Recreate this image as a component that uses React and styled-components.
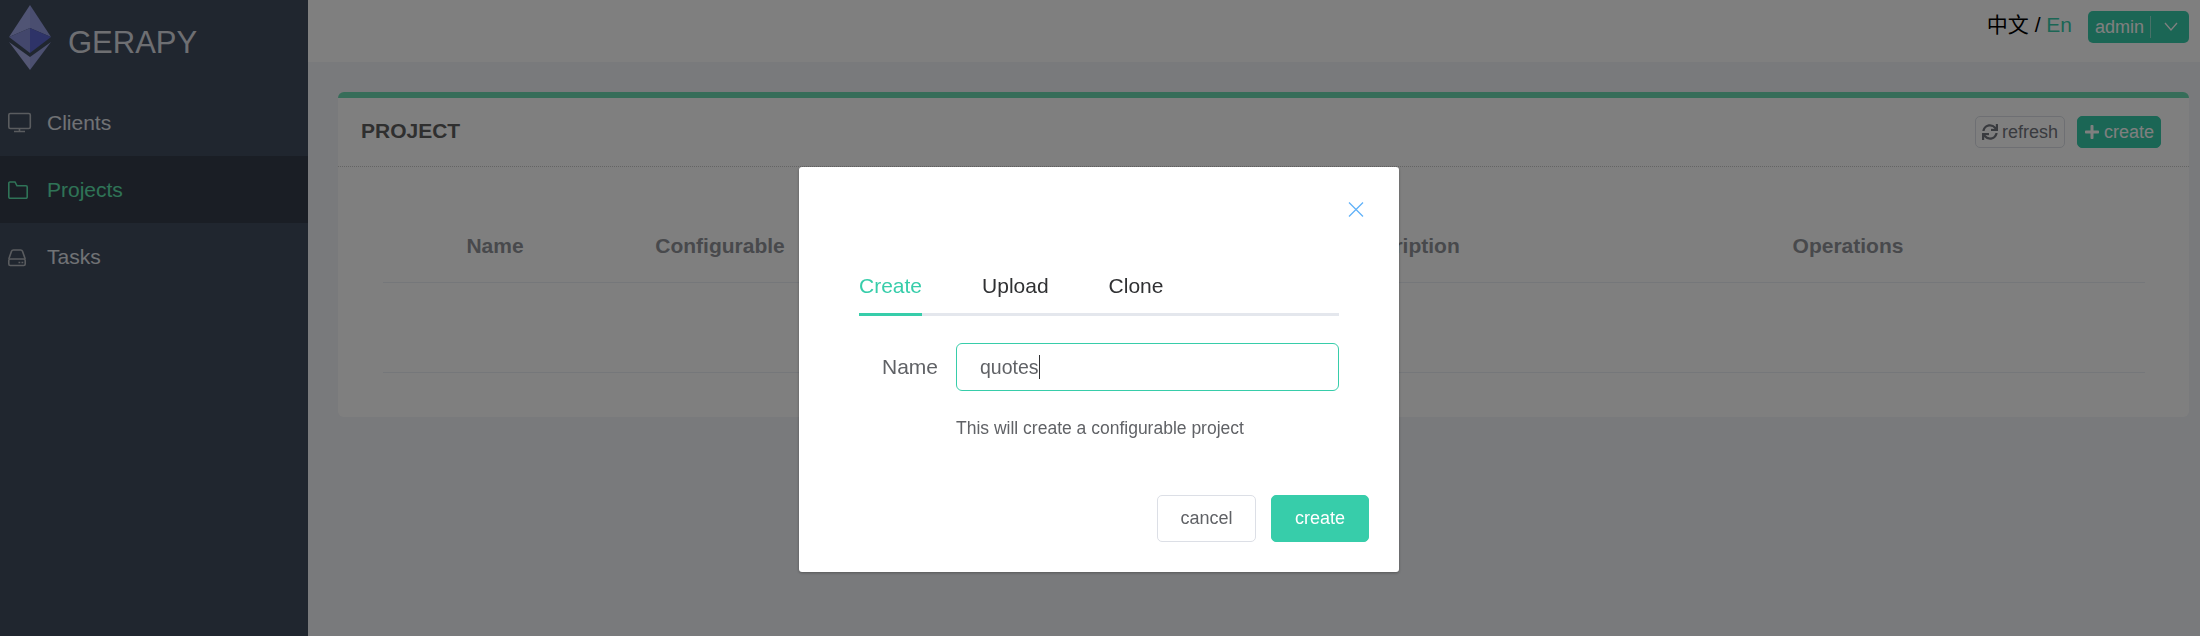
import styled, { createGlobalStyle } from "styled-components"
import { FaPlus, FaSync } from "react-icons/fa"

const GlobalStyle = createGlobalStyle`
    html, body {
        margin: 0;
        padding: 0;
        height: 100%;
        overflow: hidden;
        background-color: #f2f4f8;
        font-family: "Liberation Sans", "Noto Sans CJK SC", sans-serif;
    }
    * {
        box-sizing: border-box;
    }
`

const Container = styled.div`
    display: flex;
    height: 636px;
`

const Sidebar = styled.aside`
    width: 308px;
    flex-shrink: 0;
    background-color: #404c5e;
`

const Brand = styled.div`
    height: 89px;
    padding: 5px 0 0 9px;
    display: flex;
    align-items: flex-start;
`

const BrandName = styled.span`
    margin: 18px 0 0 17px;
    font-size: 31px;
    line-height: 40px;
    color: #dcdee4;
`

const Menu = styled.nav`
    display: flex;
    flex-direction: column;
`

const MenuItem = styled.div`
    height: 67px;
    display: flex;
    align-items: center;
    padding: 1px 0 0 8px;
    font-size: 21px;
    color: ${props => props.active ? "#5fe6ae" : "#e0e4ea"};
    background-color: ${props => props.active ? "#343c4a" : "transparent"};
`

const MenuIcon = styled.svg`
    width: 24px;
    height: 24px;
    margin-right: 15px;
    flex-shrink: 0;
    fill: none;
    stroke: ${props => props.active ? "#5fe6ae" : "#b4b8be"};
    stroke-width: 1.6;
`

const Main = styled.main`
    flex: 1;
    min-width: 0;
`

const Header = styled.header`
    height: 62px;
    background-color: #fff;
    display: flex;
    justify-content: flex-end;
    align-items: flex-start;
    padding-right: 11px;
`

const Lang = styled.div`
    font-size: 21px;
    line-height: 24px;
    color: #000;
    margin: 13px 16px 0 0;
`

const LangActive = styled.span`
    color: #37cdaa;
`

const UserButton = styled.div`
    width: 101px;
    height: 32px;
    margin-top: 11px;
    display: flex;
    align-items: center;
    padding-left: 7px;
    border-radius: 5px;
    background-color: #37cdaa;
    color: #fff;
    font-size: 18px;
`

const UserDivider = styled.span`
    width: 1px;
    height: 22px;
    margin: 0 12px 0 6px;
    background-color: rgba(255, 255, 255, 0.45);
`

const Chevron = styled.svg`
    width: 16px;
    height: 10px;
    fill: none;
    stroke: #fff;
    stroke-width: 1.3;
`

const Content = styled.div`
    padding: 30px 11px 0 30px;
`

const Panel = styled.section`
    height: 325px;
    background-color: #fff;
    border-top: 6px solid #6cdab2;
    border-radius: 6px;
`

const PanelHeader = styled.div`
    height: 69px;
    display: flex;
    align-items: center;
    padding: 0 28px 0 23px;
    border-bottom: 1px dotted #c8c8c8;
`

const PanelTitle = styled.h3`
    margin: 0 auto 2px 0;
    font-size: 21px;
    font-weight: 700;
    color: #5f5f5f;
`

const PanelButton = styled.button`
    height: 32px;
    display: flex;
    align-items: center;
    gap: 4px;
    margin-left: 12px;
    padding: 0 6px;
    font-family: inherit;
    font-size: 18px;
    border-radius: 5px;
    border: 1px solid ${props => props.primary ? "#37cdaa" : "#dcdfe6"};
    background-color: ${props => props.primary ? "#37cdaa" : "#fff"};
    color: ${props => props.primary ? "#fff" : "#73767e"};
    svg {
        font-size: 16px;
    }
`

const Table = styled.div`
    margin: 0 44px 0 45px;
`

const TableRow = styled.div`
    display: grid;
    grid-template-columns: 224px 226px 420px 298px 594px;
    border-bottom: 1px solid #ebeef5;
    height: ${props => props.empty ? "90px" : "116px"};
`

const Heading = styled.div`
    font-size: 21px;
    font-weight: 700;
    line-height: 24px;
    text-align: center;
    color: #909399;
    padding-top: 67px;
`

const Overlay = styled.div`
    position: fixed;
    inset: 0;
    background-color: rgba(0, 0, 0, 0.5);
    display: flex;
    justify-content: center;
    align-items: flex-start;
`

const Modal = styled.div`
    position: relative;
    width: 600px;
    height: 405px;
    margin: 167px 2px 0 0;
    padding-top: 89px;
    background-color: #fff;
    border-radius: 3px;
    box-shadow: 0 1px 3px rgba(0, 0, 0, 0.3);
`

const CloseIcon = styled.svg`
    position: absolute;
    top: 35px;
    right: 35px;
    width: 16px;
    height: 15px;
    fill: none;
    stroke: #62b2f8;
    stroke-width: 1.3;
`

const Tabs = styled.div`
    display: flex;
    height: 60px;
    margin: 0 60px;
    border-bottom: 3px solid #e4e7ed;
`

const Tab = styled.div`
    height: 60px;
    margin-right: 60px;
    font-size: 21px;
    line-height: 60px;
    color: ${props => props.active ? "#37cdaa" : "#303133"};
    border-bottom: 3px solid ${props => props.active ? "#37cdaa" : "transparent"};
`

const FormRow = styled.div`
    display: flex;
    margin: 27px 60px 0;
`

const Label = styled.label`
    width: 97px;
    padding-right: 18px;
    text-align: right;
    font-size: 21px;
    line-height: 48px;
    color: #606266;
`

const InputBox = styled.div`
    flex: 1;
    height: 48px;
    display: flex;
    align-items: center;
    padding-left: 23px;
    border: 1px solid #37cdaa;
    border-radius: 6px;
    font-size: 19.5px;
    color: #606266;
`

const Caret = styled.span`
    width: 1px;
    height: 24px;
    background-color: #303133;
`

const Help = styled.div`
    margin: 22px 0 0 157px;
    font-size: 17.5px;
    line-height: 30px;
    color: #606266;
`

const Footer = styled.div`
    display: flex;
    justify-content: flex-end;
    gap: 15px;
    margin-top: 52px;
    padding-right: 30px;
`

const DialogButton = styled.button`
    width: ${props => props.primary ? "98px" : "99px"};
    height: 47px;
    padding: 0;
    font-family: inherit;
    font-size: 18px;
    border-radius: 5px;
    border: 1px solid ${props => props.primary ? "#37cdaa" : "#dcdfe6"};
    background-color: ${props => props.primary ? "#37cdaa" : "#fff"};
    color: ${props => props.primary ? "#fff" : "#606266"};
`

const Logo = () => (
    <svg width="42" height="65" viewBox="0 0 42 65">
        <polygon points="21,0 0,32 21,23" fill="#a0a8e8" />
        <polygon points="21,0 42,32 21,23" fill="#949ce0" />
        <polygon points="21,23 0,32 21,48" fill="#868ed8" />
        <polygon points="21,23 42,32 21,48" fill="#5c66d0" />
        <polygon points="0,37 21,52 21,65" fill="#a8aee8" />
        <polygon points="42,37 21,52 21,65" fill="#98a0e0" />
    </svg>
)

const App = () => {
    return (
        <>
            <GlobalStyle />
            <Container>
                <Sidebar>
                    <Brand>
                        <Logo />
                        <BrandName>GERAPY</BrandName>
                    </Brand>
                    <Menu>
                        <MenuItem>
                            <MenuIcon viewBox="0 0 24 24">
                                <rect x="0.8" y="2.5" width="21.5" height="15" rx="1.5" />
                                <path d="M6 20.5h11M11.5 17.5v3" />
                            </MenuIcon>
                            Clients
                        </MenuItem>
                        <MenuItem active>
                            <MenuIcon active viewBox="0 0 24 24">
                                <path d="M0.8 5.5v13.5a1.2 1.2 0 0 0 1.2 1.2h16a1.2 1.2 0 0 0 1.2-1.2V9a1.2 1.2 0 0 0-1.2-1.2H9L7 4H2a1.2 1.2 0 0 0-1.2 1.5z" />
                            </MenuIcon>
                            Projects
                        </MenuItem>
                        <MenuItem>
                            <MenuIcon viewBox="0 0 24 24">
                                <path d="M0.8 14l2.6-7.5q0.5-1.5 2-1.5h7.2q1.5 0 2 1.5l2.6 7.5" />
                                <rect x="0.8" y="14" width="16.4" height="6.5" rx="1.5" />
                                <path d="M10.5 17.5h1.8M13.5 17.5h1.8" />
                            </MenuIcon>
                            Tasks
                        </MenuItem>
                    </Menu>
                </Sidebar>
                <Main>
                    <Header>
                        <Lang>中文 / <LangActive>En</LangActive></Lang>
                        <UserButton>
                            admin
                            <UserDivider />
                            <Chevron viewBox="0 0 16 10"><path d="M2 1l6 7 6-7" /></Chevron>
                        </UserButton>
                    </Header>
                    <Content>
                        <Panel>
                            <PanelHeader>
                                <PanelTitle>PROJECT</PanelTitle>
                                <PanelButton><FaSync />refresh</PanelButton>
                                <PanelButton primary><FaPlus />create</PanelButton>
                            </PanelHeader>
                            <Table>
                                <TableRow>
                                    <Heading>Name</Heading>
                                    <Heading>Configurable</Heading>
                                    <Heading />
                                    <Heading>Description</Heading>
                                    <Heading>Operations</Heading>
                                </TableRow>
                                <TableRow empty />
                            </Table>
                        </Panel>
                    </Content>
                </Main>
            </Container>
            <Overlay>
                <Modal>
                    <CloseIcon viewBox="0 0 16 15"><path d="M1 0.5l14 14M15 0.5l-14 14" /></CloseIcon>
                    <Tabs>
                        <Tab active>Create</Tab>
                        <Tab>Upload</Tab>
                        <Tab>Clone</Tab>
                    </Tabs>
                    <FormRow>
                        <Label>Name</Label>
                        <InputBox>quotes<Caret /></InputBox>
                    </FormRow>
                    <Help>This will create a configurable project</Help>
                    <Footer>
                        <DialogButton>cancel</DialogButton>
                        <DialogButton primary>create</DialogButton>
                    </Footer>
                </Modal>
            </Overlay>
        </>
    )
}

export default App
